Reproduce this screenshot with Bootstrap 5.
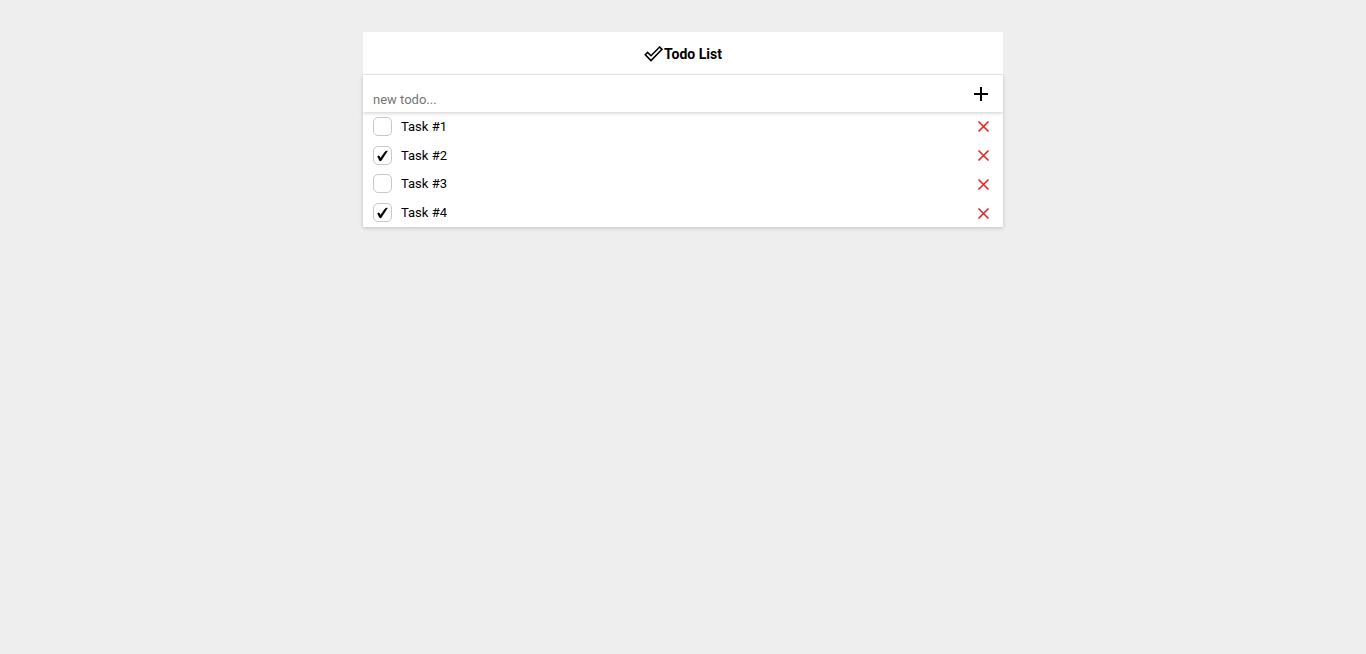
<!DOCTYPE html>
<html lang="en">
<head>
<meta charset="utf-8">
<meta name="viewport" content="width=device-width, initial-scale=1">
<title>Todo List</title>
<link href="https://cdn.jsdelivr.net/npm/bootstrap@5.3.0/dist/css/bootstrap.min.css" rel="stylesheet">
<style>
body { background: #eee; color: #000; font-family: Roboto, sans-serif; font-size: 13px; line-height: 20px; padding: 32px 0; }
.todo-app { max-width: 640px; }
.todo-title { height: 42px; padding-top: 2px; font-size: 14px; }
.todo-panel { box-shadow: 0 1px 4px rgba(0, 0, 0, .2); }
.todo-form { height: 37px; margin-top: 1px; }
.todo-form .form-control { padding: 12px 10px 0; font-size: 13px; line-height: 20px; color: #000; }
.todo-form .form-control::placeholder { color: #757575; }
.todo-form .form-control:focus { box-shadow: none; }
.todo-add { padding: 0 12px 0 0; }
.todo-items { min-height: 115px; }
.todo-items .form-check-input { width: 19px; height: 19px; border: 1px solid #c8c8c8; border-radius: 5px; }
.todo-items .form-check-input:checked {
  background: #fff url("data:image/svg+xml,%3Csvg xmlns='http://www.w3.org/2000/svg' viewBox='0 0 17 17'%3E%3Cpath d='M3.5 9.4Q5 8.2 5.7 9.6L6.4 11.2 11 4.8Q11.9 3.7 13.5 4L7.4 13.4Q6.2 14.8 5.3 13.3Z' stroke='%23000' stroke-width='.4'/%3E%3C/svg%3E") center / 17px 17px no-repeat;
}
.todo-row { padding: 0 10px; gap: 9px; }
.todo-row label { padding-top: 1px; }
</style>
</head>
<body class="min-vh-100">
<main class="todo-app mx-auto">
  <h1 class="todo-title bg-white d-flex align-items-center justify-content-center fw-bold m-0">
    <svg width="20" height="18" viewBox="0 0 20 18" fill="none" stroke="#000" stroke-width="1.6" aria-hidden="true"><path d="M1.3 9.8 3.6 7.4 7 10.7 15.6 2 18 4.3 7 15.6Z"/></svg>
    <span>Todo List</span>
  </h1>
  <form class="todo-form todo-panel bg-white d-flex position-relative" onsubmit="return false">
    <input class="form-control border-0 rounded-0 bg-transparent" type="text" placeholder="new todo..." aria-label="New todo">
    <button class="todo-add btn border-0" type="submit" aria-label="Add todo">
      <svg class="d-block" width="20" height="20" viewBox="0 0 20 20" stroke="#000" stroke-width="2" aria-hidden="true"><path d="M3 10H17M10 3V17"/></svg>
    </button>
  </form>
  <ul class="todo-items todo-panel bg-white list-unstyled d-flex flex-column m-0">
    <li class="todo-row d-flex align-items-center flex-fill">
      <input class="form-check-input flex-shrink-0 m-0" type="checkbox" id="task1"><label class="flex-grow-1" for="task1">Task #1</label>
      <button class="btn border-0 p-0" type="button" aria-label="Delete Task #1"><svg class="d-block" width="20" height="20" viewBox="0 0 20 20" stroke="#f02020" stroke-width="1.6"><path d="M5.5 5.5 15.5 15.5M15.5 5.5 5.5 15.5"/></svg></button>
    </li>
    <li class="todo-row d-flex align-items-center flex-fill">
      <input class="form-check-input flex-shrink-0 m-0" type="checkbox" id="task2" checked><label class="flex-grow-1" for="task2">Task #2</label>
      <button class="btn border-0 p-0" type="button" aria-label="Delete Task #2"><svg class="d-block" width="20" height="20" viewBox="0 0 20 20" stroke="#f02020" stroke-width="1.6"><path d="M5.5 5.5 15.5 15.5M15.5 5.5 5.5 15.5"/></svg></button>
    </li>
    <li class="todo-row d-flex align-items-center flex-fill">
      <input class="form-check-input flex-shrink-0 m-0" type="checkbox" id="task3"><label class="flex-grow-1" for="task3">Task #3</label>
      <button class="btn border-0 p-0" type="button" aria-label="Delete Task #3"><svg class="d-block" width="20" height="20" viewBox="0 0 20 20" stroke="#f02020" stroke-width="1.6"><path d="M5.5 5.5 15.5 15.5M15.5 5.5 5.5 15.5"/></svg></button>
    </li>
    <li class="todo-row d-flex align-items-center flex-fill">
      <input class="form-check-input flex-shrink-0 m-0" type="checkbox" id="task4" checked><label class="flex-grow-1" for="task4">Task #4</label>
      <button class="btn border-0 p-0" type="button" aria-label="Delete Task #4"><svg class="d-block" width="20" height="20" viewBox="0 0 20 20" stroke="#f02020" stroke-width="1.6"><path d="M5.5 5.5 15.5 15.5M15.5 5.5 5.5 15.5"/></svg></button>
    </li>
  </ul>
</main>
<script src="https://cdn.jsdelivr.net/npm/bootstrap@5.3.0/dist/js/bootstrap.bundle.min.js"></script>
</body>
</html>
